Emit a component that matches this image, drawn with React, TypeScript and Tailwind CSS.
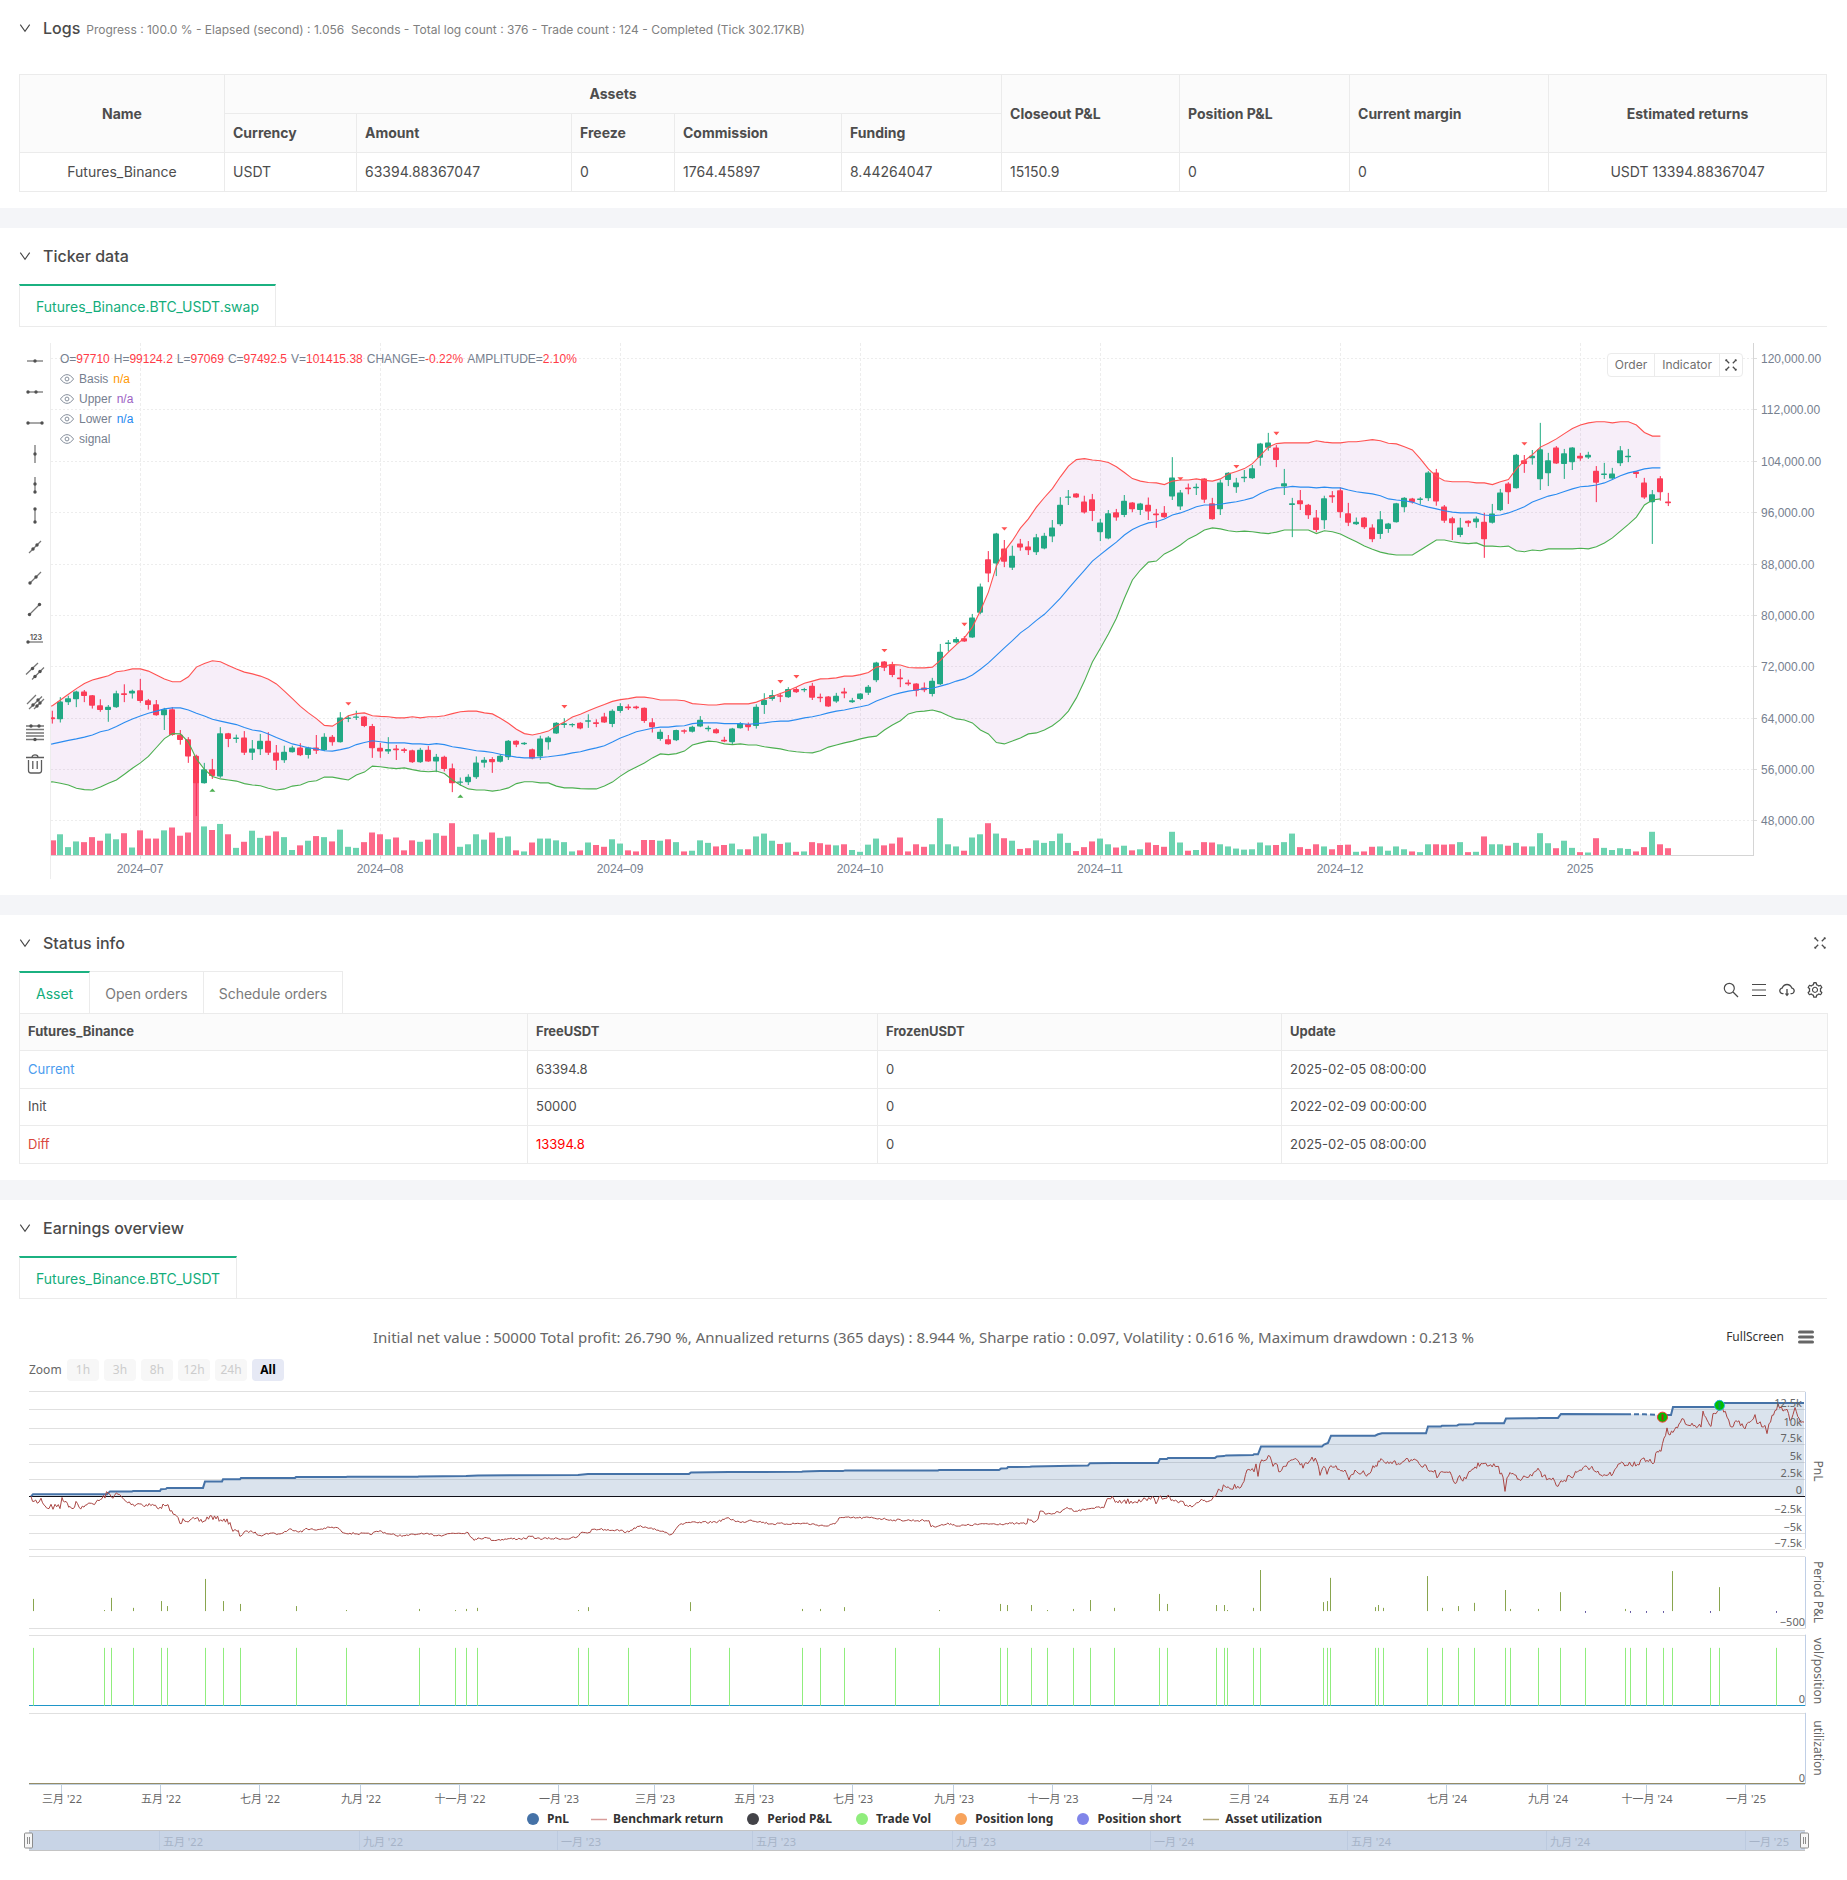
import { Fragment, type ReactNode } from 'react';
import { AiOutlineCloudDownload, AiOutlineSetting } from 'react-icons/ai';

type Point = [number, number];
type Candle = [up: 0 | 1, high: number, top: number, bottom: number, low: number, volume: number];

/* ---------- Ticker data ---------- */

const CANDLES: Candle[] = [
  [0, 1052, 1070, 1076, 1088, 1415], [1, 1014, 1026, 1076, 1085, 1398], [1, 1010, 1017, 1028, 1036, 1434],
  [1, 996, 998, 1020, 1042, 1418], [0, 994, 998, 1011, 1028, 1420], [0, 1008, 1009, 1038, 1046, 1406],
  [0, 1020, 1037, 1050, 1055, 1416], [1, 1036, 1041, 1050, 1083, 1396], [1, 996, 1003, 1042, 1044, 1412],
  [0, 978, 1003, 1008, 1028, 1395], [1, 993, 996, 1004, 1018, 1435], [0, 963, 995, 1025, 1030, 1387],
  [0, 1019, 1023, 1036, 1049, 1410], [0, 1022, 1034, 1065, 1066, 1410], [1, 1044, 1048, 1065, 1106, 1387],
  [0, 1042, 1048, 1120, 1122, 1379], [0, 1106, 1119, 1134, 1147, 1402], [0, 1126, 1132, 1180, 1198, 1393],
  [0, 1175, 1178, 1255, 1347, 1225], [1, 1198, 1216, 1255, 1256, 1376], [0, 1187, 1216, 1235, 1243, 1386],
  [1, 1098, 1115, 1236, 1240, 1369], [0, 1114, 1115, 1131, 1154, 1398], [1, 1119, 1127, 1131, 1142, 1436],
  [0, 1109, 1127, 1170, 1176, 1419], [1, 1134, 1158, 1170, 1190, 1388], [1, 1117, 1136, 1160, 1176, 1408],
  [0, 1112, 1136, 1170, 1176, 1402], [0, 1148, 1169, 1192, 1218, 1390], [1, 1150, 1167, 1191, 1198, 1406],
  [1, 1150, 1155, 1168, 1169, 1442], [0, 1143, 1155, 1177, 1179, 1429], [1, 1153, 1155, 1176, 1186, 1416],
  [0, 1120, 1155, 1164, 1173, 1403], [1, 1115, 1125, 1163, 1165, 1406], [0, 1120, 1125, 1140, 1150, 1418],
  [1, 1056, 1071, 1140, 1141, 1385], [1, 1065, 1071, 1075, 1084, 1433], [1, 1052, 1068, 1072, 1078, 1436],
  [0, 1067, 1068, 1095, 1098, 1420], [0, 1089, 1095, 1157, 1184, 1393], [0, 1142, 1156, 1166, 1184, 1398],
  [1, 1126, 1159, 1166, 1173, 1412], [0, 1148, 1158, 1163, 1190, 1407], [0, 1156, 1160, 1165, 1170, 1443],
  [0, 1161, 1163, 1196, 1198, 1415], [1, 1156, 1161, 1196, 1198, 1419], [0, 1151, 1161, 1194, 1195, 1413],
  [1, 1173, 1181, 1194, 1224, 1395], [0, 1178, 1181, 1215, 1222, 1402], [0, 1200, 1213, 1255, 1280, 1367],
  [1, 1239, 1250, 1254, 1262, 1433], [1, 1230, 1237, 1252, 1260, 1426], [1, 1180, 1197, 1238, 1243, 1398],
  [1, 1182, 1189, 1198, 1211, 1413], [0, 1182, 1187, 1196, 1226, 1393], [1, 1173, 1178, 1195, 1197, 1408],
  [1, 1134, 1136, 1182, 1190, 1404], [0, 1135, 1136, 1147, 1154, 1443], [1, 1140, 1142, 1146, 1148, 1446],
  [0, 1158, 1160, 1186, 1188, 1421], [1, 1122, 1130, 1180, 1190, 1410], [1, 1123, 1127, 1140, 1161, 1410],
  [1, 1084, 1086, 1116, 1117, 1415], [1, 1073, 1087, 1092, 1100, 1420], [1, 1087, 1089, 1092, 1098, 1446],
  [0, 1084, 1086, 1102, 1104, 1443], [1, 1062, 1079, 1083, 1100, 1421], [0, 1076, 1084, 1089, 1098, 1428],
  [0, 1058, 1068, 1085, 1086, 1433], [1, 1048, 1052, 1089, 1098, 1412], [1, 1031, 1039, 1053, 1058, 1424],
  [0, 1034, 1040, 1045, 1050, 1443], [0, 1038, 1040, 1045, 1048, 1446], [0, 1043, 1044, 1081, 1086, 1414],
  [0, 1073, 1084, 1098, 1113, 1414], [1, 1104, 1111, 1131, 1136, 1416], [0, 1120, 1132, 1146, 1147, 1412],
  [1, 1105, 1106, 1135, 1137, 1420], [0, 1104, 1107, 1111, 1116, 1446], [1, 1094, 1097, 1111, 1113, 1444],
  [1, 1067, 1077, 1096, 1098, 1415], [1, 1094, 1100, 1104, 1110, 1422], [0, 1101, 1104, 1115, 1116, 1432],
  [0, 1125, 1133, 1138, 1140, 1428], [1, 1100, 1102, 1140, 1148, 1424], [1, 1084, 1087, 1101, 1102, 1440],
  [0, 1085, 1089, 1098, 1108, 1440], [1, 1034, 1041, 1095, 1102, 1404], [1, 1003, 1021, 1036, 1061, 1396],
  [1, 994, 1008, 1019, 1024, 1416], [0, 1002, 1009, 1013, 1028, 1425], [1, 986, 991, 1014, 1016, 1421],
  [0, 986, 991, 1000, 1002, 1447], [1, 988, 991, 995, 1000, 1446], [0, 974, 982, 1016, 1022, 1420],
  [0, 1004, 1013, 1017, 1028, 1423], [0, 1011, 1012, 1040, 1041, 1427], [1, 1002, 1010, 1026, 1030, 1429],
  [0, 988, 998, 1004, 1017, 1426], [1, 1016, 1023, 1028, 1030, 1442], [1, 1003, 1004, 1019, 1022, 1447],
  [1, 980, 985, 1002, 1008, 1427], [1, 915, 917, 967, 972, 1410], [0, 913, 914, 932, 941, 1429],
  [0, 915, 922, 952, 958, 1424], [0, 935, 959, 964, 986, 1407], [0, 965, 973, 978, 982, 1446],
  [0, 975, 976, 996, 1012, 1426], [0, 973, 987, 995, 1000, 1433], [1, 960, 968, 1005, 1012, 1426],
  [1, 865, 887, 978, 980, 1353], [1, 854, 861, 865, 886, 1426], [1, 846, 851, 861, 864, 1432],
  [0, 843, 849, 858, 859, 1444], [1, 781, 791, 847, 848, 1407], [1, 696, 704, 778, 782, 1398],
  [0, 605, 628, 668, 692, 1367], [1, 554, 556, 640, 675, 1396], [0, 574, 598, 635, 650, 1409],
  [1, 590, 618, 652, 658, 1416], [0, 571, 584, 595, 604, 1439], [0, 577, 592, 603, 616, 1437],
  [1, 557, 566, 608, 616, 1415], [1, 554, 562, 598, 600, 1422], [1, 518, 539, 564, 580, 1417],
  [1, 454, 475, 530, 535, 1396], [1, 434, 452, 456, 476, 1422], [0, 443, 444, 455, 456, 1445],
  [0, 450, 466, 497, 500, 1434], [0, 445, 460, 493, 521, 1418], [1, 515, 525, 552, 577, 1410],
  [1, 490, 499, 570, 572, 1426], [0, 487, 496, 511, 520, 1435], [1, 448, 464, 504, 510, 1430],
  [0, 468, 469, 488, 496, 1443], [1, 470, 472, 490, 504, 1440], [0, 455, 475, 494, 518, 1421],
  [0, 487, 500, 505, 540, 1428], [0, 479, 498, 510, 512, 1433], [1, 342, 399, 452, 462, 1391],
  [1, 434, 441, 480, 490, 1421], [0, 416, 427, 432, 446, 1444], [1, 416, 425, 429, 448, 1442],
  [0, 401, 402, 461, 470, 1420], [0, 456, 471, 516, 517, 1421], [1, 405, 413, 488, 504, 1426],
  [1, 384, 386, 406, 423, 1432], [1, 400, 413, 426, 442, 1438], [1, 378, 397, 401, 412, 1441],
  [1, 364, 373, 401, 403, 1440], [1, 302, 304, 344, 366, 1421], [1, 274, 301, 316, 324, 1429],
  [0, 308, 315, 350, 370, 1428], [1, 375, 415, 424, 448, 1420], [1, 456, 471, 476, 566, 1396],
  [0, 434, 463, 474, 490, 1434], [0, 473, 475, 505, 515, 1439], [0, 490, 511, 546, 552, 1426],
  [1, 450, 457, 519, 543, 1432], [0, 437, 449, 454, 470, 1440], [0, 427, 435, 496, 512, 1428],
  [0, 470, 499, 526, 535, 1427], [1, 511, 523, 530, 532, 1447], [0, 510, 511, 538, 543, 1446],
  [0, 530, 539, 572, 580, 1433], [1, 493, 516, 557, 571, 1432], [1, 526, 528, 543, 554, 1444],
  [1, 470, 471, 524, 525, 1432], [1, 454, 456, 482, 496, 1440], [0, 456, 458, 468, 472, 1446],
  [1, 454, 458, 462, 475, 1448], [1, 381, 385, 457, 465, 1426], [0, 375, 385, 466, 478, 1426],
  [0, 476, 480, 520, 526, 1427], [0, 509, 513, 527, 574, 1426], [1, 512, 539, 560, 566, 1420],
  [0, 519, 520, 527, 537, 1448], [1, 508, 514, 524, 540, 1447], [0, 498, 523, 572, 624, 1404],
  [1, 473, 500, 526, 528, 1426], [1, 431, 441, 491, 493, 1426], [0, 412, 416, 440, 473, 1430],
  [1, 333, 335, 429, 430, 1422], [0, 336, 351, 361, 386, 1432], [1, 322, 338, 345, 363, 1432],
  [1, 246, 320, 404, 434, 1395], [1, 330, 351, 387, 423, 1423], [0, 311, 315, 360, 361, 1437],
  [1, 319, 331, 361, 403, 1416], [1, 314, 315, 356, 378, 1436], [0, 330, 338, 346, 352, 1448],
  [1, 327, 335, 343, 347, 1449], [0, 367, 380, 414, 468, 1409], [1, 358, 388, 392, 403, 1436],
  [1, 372, 388, 402, 405, 1442], [1, 311, 323, 359, 367, 1437], [1, 319, 338, 342, 356, 1439],
  [0, 381, 382, 389, 400, 1446], [0, 400, 413, 455, 459, 1434], [1, 434, 446, 468, 585, 1391],
  [0, 395, 401, 440, 464, 1426], [0, 442, 466, 471, 479, 1437]
];

const UPPER = [
  1038, 1022, 1006, 990, 976, 966, 960, 954, 943, 940, 935, 935, 941, 952, 963, 971, 971, 957, 930, 920, 912, 915, 925,
  935, 944, 949, 955, 964, 977, 997, 1018, 1040, 1058, 1074, 1093, 1095, 1081, 1066, 1060, 1058, 1066, 1068, 1069, 1072,
  1072, 1069, 1072, 1069, 1069, 1066, 1060, 1055, 1053, 1053, 1058, 1061, 1073, 1087, 1104, 1116, 1120, 1115, 1109,
  1095, 1084, 1070, 1062, 1052, 1043, 1035, 1026, 1021, 1018, 1014, 1014, 1017, 1022, 1022, 1022, 1024, 1032, 1034,
  1036, 1036, 1033, 1033, 1033, 1033, 1028, 1019, 1012, 1004, 995, 986, 975, 969, 963, 962, 960, 955, 955, 951, 945,
  930, 926, 923, 924, 931, 932, 932, 930, 911, 888, 867, 848, 818, 772, 720, 647, 606, 576, 541, 515, 482, 455, 430,
  397, 367, 349, 346, 350, 352, 357, 369, 385, 402, 409, 413, 414, 419, 409, 406, 406, 403, 407, 409, 403, 389, 382,
  374, 360, 337, 314, 304, 302, 302, 302, 302, 296, 300, 302, 302, 299, 299, 296, 293, 296, 303, 305, 313, 322, 347,
  375, 396, 408, 411, 411, 411, 414, 414, 419, 411, 405, 375, 352, 335, 314, 303, 291, 276, 262, 252, 246, 243, 243,
  246, 243, 243, 252, 273, 283, 283
];

const BASIS = [
  1145, 1140, 1135, 1131, 1126, 1120, 1111, 1106, 1096, 1085, 1075, 1067, 1059, 1053, 1047, 1044, 1044, 1050, 1059,
  1067, 1076, 1081, 1086, 1091, 1099, 1106, 1109, 1117, 1127, 1136, 1145, 1150, 1156, 1159, 1164, 1165, 1161, 1156,
  1147, 1141, 1136, 1139, 1142, 1142, 1142, 1145, 1145, 1147, 1144, 1147, 1153, 1156, 1160, 1164, 1166, 1169, 1174,
  1178, 1182, 1184, 1184, 1183, 1181, 1178, 1175, 1170, 1167, 1161, 1156, 1150, 1140, 1128, 1120, 1111, 1106, 1101,
  1098, 1098, 1095, 1094, 1088, 1086, 1086, 1086, 1088, 1088, 1088, 1090, 1088, 1086, 1083, 1081, 1081, 1077, 1072,
  1069, 1064, 1058, 1053, 1050, 1045, 1041, 1036, 1025, 1016, 1008, 1002, 997, 994, 990, 989, 983, 977, 969, 963, 952,
  936, 918, 897, 876, 856, 834, 818, 799, 782, 760, 737, 710, 684, 659, 633, 615, 597, 580, 560, 545, 534, 526, 523,
  515, 504, 498, 490, 481, 476, 476, 474, 470, 467, 462, 456, 444, 434, 428, 427, 424, 426, 426, 428, 426, 428, 428,
  434, 439, 442, 445, 450, 459, 462, 464, 468, 476, 482, 487, 492, 496, 498, 498, 498, 504, 506, 504, 498, 490, 481,
  468, 459, 451, 446, 438, 431, 425, 423, 420, 414, 405, 394, 386, 381, 375, 372, 372
];

const LOWER = [
  1251, 1255, 1260, 1269, 1273, 1274, 1266, 1255, 1246, 1230, 1213, 1198, 1180, 1155, 1130, 1116, 1117, 1140, 1187,
  1216, 1236, 1243, 1246, 1249, 1256, 1260, 1262, 1269, 1274, 1271, 1263, 1260, 1251, 1248, 1238, 1238, 1242, 1246,
  1232, 1224, 1207, 1209, 1212, 1214, 1212, 1217, 1221, 1223, 1221, 1228, 1246, 1260, 1271, 1274, 1274, 1277, 1274,
  1268, 1256, 1251, 1251, 1254, 1254, 1263, 1268, 1268, 1270, 1271, 1271, 1263, 1252, 1235, 1221, 1210, 1198, 1184,
  1173, 1175, 1172, 1165, 1148, 1142, 1137, 1139, 1145, 1147, 1145, 1148, 1148, 1153, 1156, 1159, 1164, 1167, 1169,
  1170, 1164, 1154, 1148, 1142, 1137, 1131, 1126, 1123, 1106, 1092, 1080, 1061, 1055, 1053, 1050, 1056, 1066, 1075,
  1078, 1086, 1106, 1117, 1141, 1145, 1137, 1128, 1117, 1114, 1106, 1094, 1077, 1053, 1016, 969, 916, 877, 837, 793,
  737, 686, 658, 636, 633, 613, 602, 588, 571, 560, 546, 540, 543, 548, 551, 549, 551, 554, 556, 552, 546, 546, 546,
  546, 556, 548, 551, 557, 568, 579, 591, 600, 608, 613, 616, 616, 616, 602, 588, 574, 574, 579, 582, 584, 582, 591,
  591, 593, 591, 604, 607, 602, 604, 599, 599, 599, 599, 597, 599, 593, 582, 568, 549, 530, 510, 476, 462, 459
];

const SELL_SIGNALS: Point[] = [
  [37, 1028], [64, 1036], [91, 966], [93, 952], [104, 879], [114, 806], [119, 538], [141, 398], [148, 364], [153, 271],
  [184, 300]
];
const BUY_SIGNALS: Point[] = [[20, 1279], [51, 1296]];

const PRICE_TICKS = [
  '120,000.00', '112,000.00', '104,000.00', '96,000.00', '88,000.00', '80,000.00', '72,000.00', '64,000.00',
  '56,000.00', '48,000.00'
];
const MONTH_TICKS: [string, number][] = [
  ['2024–07', 140], ['2024–08', 380], ['2024–09', 620], ['2024–10', 860], ['2024–11', 1100], ['2024–12', 1340],
  ['2025', 1580]
];

// chart units -> pixels
const cx = (i: number) => 52.4 + i * 8;
const cy = (v: number) => v / 2.8;

const linePath = (points: Point[]) => points.map(([x, y], i) => `${i ? 'L' : 'M'}${x.toFixed(1)} ${y.toFixed(1)}`).join('');
const bandPoints = (values: number[]): Point[] => [[50, cy(values[0] + 1)], ...values.map((v, i): Point => [cx(i), cy(v)])];

function TickerChart() {
  const upper = bandPoints(UPPER);
  const lower = bandPoints(LOWER);
  return (
    <svg viewBox="50 0 1797 544" className="block w-full" role="img" aria-label="BTC_USDT candles">
      {PRICE_TICKS.map((label, i) => {
        const y = Math.floor(23.6 + i * 51.35) + 0.5;
        return (
          <g key={label}>
            <line x1={51} x2={1753} y1={y} y2={y} stroke="#ededed" strokeDasharray="2 2" />
            <line x1={1754} x2={1757} y1={y} y2={y} stroke="#dddddd" />
            <text x={1761} y={y + 4} fontSize={12} fill="#76808f" fontFamily="'Liberation Sans', sans-serif">{label}</text>
          </g>
        );
      })}
      {MONTH_TICKS.map(([label, x]) => (
        <g key={label}>
          <line x1={x + 0.5} x2={x + 0.5} y1={8} y2={520} stroke="#ededed" strokeDasharray="3 2" />
          <line x1={x + 0.5} x2={x + 0.5} y1={521} y2={524} stroke="#dddddd" />
          <text x={x} y={538} fontSize={12} textAnchor="middle" fill="#76808f" fontFamily="'Liberation Sans', sans-serif">
            {label}
          </text>
        </g>
      ))}

      <path d={`${linePath(upper)}${linePath([...lower].reverse()).replace('M', 'L')}Z`} fill="#9c27b0" fillOpacity={0.08} />

      {CANDLES.map(([up, , , , , volume], i) => (
        <rect
          key={i}
          x={Math.max(51, Math.round(cx(i) - 3))}
          y={cy(volume)}
          width={i === 0 ? 5 : 6}
          height={cy(1457 - volume)}
          fill={up ? '#6cd3b0' : '#fd6889'}
        />
      ))}
      {CANDLES.map(([up, high, top, bottom, low], i) => (
        <g key={i} fill={up ? '#1fab80' : '#f9294f'}>
          <rect x={Math.round(cx(i)) - 0.2} y={cy(high)} width={1} height={cy(low - high)} />
          <rect
            x={Math.max(51, Math.round(cx(i) - 3))}
            y={cy(top)}
            width={i === 0 ? 4 : 6}
            height={Math.max(1.4, cy(bottom - top))}
            rx={0.8}
            fill={up ? '#22a884' : '#fb3d57'}
          />
        </g>
      ))}

      <path d={linePath(upper)} fill="none" stroke="#ff5252" strokeWidth={1.1} />
      <path d={linePath(bandPoints(BASIS))} fill="none" stroke="#2b8cf0" strokeWidth={1.1} />
      <path d={linePath(lower)} fill="none" stroke="#4caf50" strokeWidth={1.1} />

      {SELL_SIGNALS.map(([i, v]) => (
        <path key={i} d={`M${cx(i) - 3} ${cy(v)}h6l-3 3.4z`} fill="#ff5252" />
      ))}
      {BUY_SIGNALS.map(([i, v]) => (
        <path key={i} d={`M${cx(i) - 3} ${cy(v)}h6l-3 -3.4z`} fill="#4caf50" />
      ))}

      <line x1={50.5} x2={50.5} y1={8} y2={544} stroke="#ededed" />
      <line x1={51} x2={1753} y1={520.5} y2={520.5} stroke="#d5d5d5" />
      <line x1={1753.5} x2={1753.5} y1={8} y2={521} stroke="#d5d5d5" />
    </svg>
  );
}

/* ---------- Earnings data ---------- */

const PNL: Point[] = [
  [31, 494], [33, 488], [107, 488], [110, 480], [132, 480], [133, 479], [160, 479], [161, 474], [166, 473], [167, 470],
  [203, 470], [205, 452], [222, 452], [223, 446], [240, 446], [241, 442], [295, 442], [296, 440], [346, 440], [347, 439],
  [418, 439], [419, 438], [466, 437], [478, 435], [578, 434], [588, 431], [689, 431], [691, 427], [729, 426],
  [802, 425], [803, 424], [820, 423], [843, 423], [845, 421], [938, 421], [939, 420], [999, 420], [1001, 416],
  [1007, 415], [1008, 412], [1030, 411], [1032, 410], [1073, 408], [1088, 407], [1090, 401], [1113, 400], [1158, 400],
  [1160, 389], [1167, 389], [1168, 386], [1215, 386], [1217, 382], [1224, 381], [1226, 379], [1253, 378], [1254, 376],
  [1258, 376], [1261, 354], [1322, 354], [1324, 349], [1328, 344], [1331, 324], [1375, 324], [1378, 320], [1382, 317],
  [1426, 317], [1428, 298], [1441, 298], [1442, 296], [1457, 295], [1459, 293], [1473, 292], [1475, 289], [1504, 289],
  [1506, 276], [1537, 275], [1539, 274], [1558, 274], [1561, 263], [1626, 264]
];
const PNL_DASHED: Point[] = [[1626, 264], [1645, 264], [1660, 266]];
const PNL_TAIL: Point[] = [[1660, 266], [1671, 266], [1673, 244], [1717, 244], [1720, 232], [1804, 232]];

const BENCHMARK: Point[] = [
  [31, 494], [34, 508], [39, 510], [41, 499], [45, 520], [49, 528], [51, 516], [53, 530], [55, 516], [60, 528],
  [62, 497], [66, 508], [70, 522], [73, 528], [76, 508], [79, 524], [84, 524], [90, 513], [96, 510], [102, 500],
  [108, 484], [111, 494], [118, 488], [124, 503], [131, 517], [138, 514], [146, 517], [154, 519], [160, 524],
  [166, 520], [168, 517], [170, 535], [175, 545], [178, 553], [180, 570], [183, 556], [190, 560], [204, 563],
  [210, 548], [216, 557], [224, 557], [230, 567], [233, 592], [237, 592], [241, 605], [244, 594], [252, 592],
  [260, 603], [270, 597], [280, 599], [291, 585], [302, 594], [306, 583], [315, 588], [332, 580], [339, 584],
  [342, 594], [350, 597], [370, 600], [380, 590], [388, 599], [395, 602], [405, 604], [420, 599], [440, 603],
  [452, 597], [468, 595], [474, 617], [478, 610], [488, 611], [493, 617], [505, 613], [525, 612], [531, 606],
  [536, 612], [570, 612], [577, 608], [582, 594], [589, 595], [593, 586], [600, 586], [616, 588], [629, 594],
  [634, 582], [639, 578], [653, 586], [663, 591], [671, 601], [678, 577], [686, 567], [698, 568], [718, 565],
  [727, 554], [741, 567], [751, 560], [771, 571], [796, 570], [804, 569], [827, 577], [835, 571], [839, 554],
  [873, 554], [894, 560], [929, 562], [931, 579], [951, 570], [957, 577], [984, 571], [1027, 570], [1028, 556],
  [1033, 566], [1038, 558], [1040, 535], [1047, 543], [1061, 538], [1067, 525], [1076, 535], [1090, 528],
  [1102, 524], [1109, 500], [1114, 502], [1118, 512], [1131, 507], [1147, 506], [1154, 498], [1156, 515],
  [1159, 495], [1164, 500], [1168, 490], [1171, 505], [1180, 507], [1190, 518], [1200, 507], [1212, 503],
  [1217, 484], [1225, 466], [1241, 468], [1244, 452], [1247, 420], [1254, 425], [1256, 403], [1258, 438],
  [1260, 402], [1270, 382], [1273, 410], [1276, 402], [1280, 425], [1291, 392], [1299, 398], [1303, 415],
  [1312, 384], [1317, 398], [1320, 435], [1324, 410], [1327, 432], [1329, 415], [1336, 408], [1342, 422],
  [1345, 420], [1349, 448], [1355, 420], [1365, 432], [1371, 425], [1373, 408], [1377, 410], [1381, 388],
  [1386, 402], [1398, 402], [1406, 388], [1419, 402], [1423, 412], [1435, 420], [1437, 442], [1440, 427],
  [1450, 425], [1455, 458], [1458, 442], [1466, 445], [1472, 418], [1481, 402], [1489, 408], [1497, 410],
  [1503, 440], [1505, 480], [1507, 442], [1510, 427], [1522, 445], [1532, 437], [1538, 415], [1542, 440],
  [1553, 442], [1558, 466], [1561, 450], [1571, 440], [1580, 420], [1592, 410], [1601, 434], [1613, 430],
  [1620, 402], [1639, 406], [1644, 386], [1653, 403], [1657, 368], [1661, 368], [1667, 302], [1670, 322],
  [1673, 315], [1682, 276], [1689, 295], [1701, 300], [1703, 255], [1707, 280], [1711, 298], [1713, 262],
  [1722, 242], [1727, 272], [1732, 300], [1736, 282], [1745, 305], [1755, 265], [1757, 290], [1765, 295],
  [1767, 318], [1769, 290], [1778, 235], [1783, 255], [1787, 250], [1790, 282], [1793, 265], [1795, 245],
  [1799, 275], [1804, 286]
];

// [x, value top, or 820 for a small loss, or 0 when nothing was realised]
const TRADES: Point[] = [
  [33, 781], [104, 812], [111, 778], [133, 806], [161, 787], [167, 801], [205, 725], [223, 787], [240, 795], [296, 801],
  [346, 812], [419, 809], [455, 812], [466, 809], [477, 806], [578, 812], [588, 804], [628, 0], [690, 790], [729, 0],
  [802, 809], [820, 809], [844, 804], [895, 0], [939, 812], [1000, 795], [1007, 798], [1031, 798], [1047, 812],
  [1073, 809], [1090, 784], [1114, 806], [1159, 767], [1167, 795], [1216, 798], [1224, 798], [1227, 812], [1253, 806],
  [1260, 700], [1323, 790], [1327, 787], [1330, 722], [1375, 804], [1378, 798], [1383, 806], [1427, 717], [1442, 806],
  [1458, 801], [1474, 792], [1505, 756], [1510, 809], [1538, 809], [1560, 762], [1585, 820], [1625, 809], [1630, 820],
  [1646, 820], [1663, 820], [1672, 703], [1710, 820], [1719, 748], [1776, 820]
];

const PNL_TICKS: [string, number][] = [
  ['', 200], ['12.5k', 250], ['10k', 301], ['7.5k', 348], ['5k', 398], ['2.5k', 446], ['0', 494], ['−2.5k', 545],
  ['−5k', 595], ['−7.5k', 642]
];
const TIME_TICKS: [string, number][] = [
  ["三月 '22", 61], ["五月 '22", 160], ["七月 '22", 259], ["九月 '22", 360], ["十一月 '22", 459], ["一月 '23", 558],
  ["三月 '23", 654], ["五月 '23", 753], ["七月 '23", 852], ["九月 '23", 953], ["十一月 '23", 1052], ["一月 '24", 1151],
  ["三月 '24", 1248], ["五月 '24", 1347], ["七月 '24", 1446], ["九月 '24", 1547], ["十一月 '24", 1646], ["一月 '25", 1745]
];
const NAV_TICKS: [string, number][] = [
  ["五月 '22", 159], ["九月 '22", 359], ["一月 '23", 557], ["五月 '23", 752], ["九月 '23", 952], ["一月 '24", 1150],
  ["五月 '24", 1347], ["九月 '24", 1546], ["一月 '25", 1745]
];
const AXIS_TITLES: [string, number][] = [['PnL', 86], ['Period P&L', 207], ['vol/position', 286], ['utilization', 363]];

const CHART_FONT = "'Noto Sans', 'Noto Sans CJK SC', sans-serif";

const ey = (v: number) => v / 2.8 - 65;
const scaled = (points: Point[]) => points.map(([x, y]): Point => [x, ey(y)]);
const crisp = (v: number) => Math.round(ey(v)) + 0.5;

// daily closes between the key points, with a small repeatable wobble
function dailySeries(keys: Point[]): Point[] {
  const out: Point[] = [];
  let seed = 7;
  for (let i = 1; i < keys.length; i++) {
    const [x0, y0] = keys[i - 1];
    const [x1, y1] = keys[i];
    const steps = Math.max(1, Math.round((x1 - x0) / 1.6));
    const amp = x0 > 240 && x0 < 1100 ? 3 : 8;
    for (let s = 0; s < steps; s++) {
      seed = (seed * 16807) % 2147483647;
      const wobble = s === 0 ? 0 : (seed / 2147483647 - 0.5) * 2 * amp;
      out.push([x0 + ((x1 - x0) * s) / steps, ey(y0 + ((y1 - y0) * s) / steps + wobble)]);
    }
  }
  out.push([keys[keys.length - 1][0], ey(keys[keys.length - 1][1])]);
  return out;
}

function EarningsChart() {
  const area = scaled([...PNL, ...PNL_DASHED, ...PNL_TAIL]);
  const blueLine = { fill: 'none', stroke: '#4572a7', strokeWidth: 2 };
  return (
    <svg viewBox="0 0 1847 423" className="block w-full" role="img" aria-label="Earnings" fontFamily={CHART_FONT} fontSize={11}>
      {PNL_TICKS.map(([label, v]) => (
        <line key={label} x1={29} x2={1805} y1={crisp(v)} y2={crisp(v)} stroke="#e0e0e0" />
      ))}
      {[662, 863, 881, 1100].map((v) => (
        <line key={v} x1={29} x2={1805} y1={crisp(v)} y2={crisp(v)} stroke="#e0e0e0" />
      ))}

      <path d={`${linePath(area)}V${ey(494)}H31Z`} fill="#4572a7" fillOpacity={0.2} />
      <line x1={29} x2={1805} y1={crisp(493)} y2={crisp(493)} stroke="#101018" />
      <path d={linePath(scaled(PNL))} {...blueLine} />
      <path d={linePath(scaled(PNL_DASHED))} {...blueLine} strokeDasharray="5 3" />
      <path d={linePath(scaled(PNL_TAIL))} {...blueLine} />
      <path d={linePath(dailySeries(BENCHMARK))} fill="none" stroke="#aa4643" strokeWidth={1} strokeLinejoin="round" />

      <g strokeWidth={1} fill="#00c000">
        <circle cx={1662.5} cy={ey(272)} r={5} stroke="#ff3030" />
        <path d={`M1662.5 ${ey(264)}v6`} stroke="#b03010" strokeWidth={2} />
        <circle cx={1719.5} cy={ey(239)} r={5} stroke="#2bb5e8" />
        <path d={`M1719.5 ${ey(231)}v6`} stroke="#0a8f70" strokeWidth={2} />
      </g>

      {TRADES.map(([x, v]) => (
        <Fragment key={x}>
          {v > 0 && (
            <rect
              x={x}
              y={ey(Math.min(v, 815))}
              width={1}
              height={Math.abs(815 - v) / 2.8}
              fill={v > 815 ? '#5a4e9c' : '#89a54e'}
            />
          )}
        </Fragment>
      ))}
      <line x1={29} x2={1805} y1={crisp(1079)} y2={crisp(1079)} stroke="#1f96c8" />
      {TRADES.map(([x]) => (
        <rect key={x} x={x} y={ey(918)} width={1} height={162 / 2.8} fill="#90ed7d" />
      ))}
      <line x1={29} x2={1805} y1={crisp(1300)} y2={crisp(1300)} stroke="#c0d0e0" />
      <line x1={29} x2={1805} y1={crisp(1297)} y2={crisp(1297)} stroke="#968c66" />

      {[[201, 640], [663, 864], [881, 1081], [1100, 1299]].map(([a, b]) => (
        <line key={a} x1={1805.5} x2={1805.5} y1={ey(a)} y2={ey(b)} stroke="#c0cfe6" strokeWidth={1} />
      ))}

      <g fill="#666666">
        {PNL_TICKS.map(([label, v]) => (
          <text key={label} x={1802} y={crisp(v) - 3} textAnchor="end">{label}</text>
        ))}
        <text x={1805} y={crisp(863) - 3} textAnchor="end">−500</text>
        <text x={1805} y={crisp(1079) - 3} textAnchor="end">0</text>
        <text x={1805} y={crisp(1298) - 3} textAnchor="end">0</text>
        {AXIS_TITLES.map(([label, y]) => (
          <text key={label} transform={`translate(1814 ${y}) rotate(90)`} textAnchor="middle" fontSize={12}>{label}</text>
        ))}
        {TIME_TICKS.map(([label, x]) => (
          <g key={label}>
            <line x1={x + 0.5} x2={x + 0.5} y1={400} y2={409} stroke="#c0d0e0" />
            <text x={x + 1} y={418} textAnchor="middle">{label}</text>
          </g>
        ))}
      </g>
    </svg>
  );
}

function Navigator() {
  return (
    <svg viewBox="0 0 1847 24" className="block w-full" role="img" aria-label="Range navigator" fontFamily={CHART_FONT} fontSize={11}>
      <rect x={29} y={1.5} width={1776} height={20} fill="#c8d4e6" />
      <path d="M29 1.5H1805M29 21.5H1805" stroke="#c4c4c4" />
      {NAV_TICKS.map(([label, x]) => (
        <g key={label}>
          <line x1={x + 0.5} x2={x + 0.5} y1={2} y2={21} stroke="#bccadf" />
          <text x={x + 4} y={17} fill="#a6b3c7">{label}</text>
        </g>
      ))}
      {[28.5, 1804.5].map((x) => (
        <g key={x} stroke="#8c8c8c">
          <rect x={x - 4} y={4} width={8} height={15} fill="#f6f6f6" rx={1} />
          <path d={`M${x - 1} 8v7M${x + 1} 8v7`} />
        </g>
      ))}
    </svg>
  );
}

/* ---------- Icons ---------- */

function Chevron() {
  return (
    <svg viewBox="0 0 12 12" className="h-3 w-3" fill="none" stroke="#444" strokeWidth={1.1}>
      <path d="M1.3 2.6L6 9.2L10.7 2.6" />
    </svg>
  );
}

function ExpandIcon() {
  return (
    <svg viewBox="0 0 14 14" className="h-3.5 w-3.5" fill="none" stroke="#4a4a4a" strokeWidth={1.3}>
      <path d="M5.2 5.2L2 2M8.8 5.2L12 2M5.2 8.8L2 12M8.8 8.8L12 12" />
      <path d="M1.7 3.2V1.7H3.2M10.8 1.7h1.5V3.200M1.7 10.8v1.5H3.2M10.8 12.3h1.5V10.8" strokeWidth={0.8} />
    </svg>
  );
}

function EyeIcon() {
  return (
    <svg viewBox="0 0 16 12" className="h-3 w-3.5" fill="none" stroke="#76808f" strokeWidth={1}>
      <path d="M0.5 6C3 2.6 5.4 1 8 1S13 2.6 15.5 6C13 9.4 10.6 11 8 11S3 9.4 0.5 6Z" />
      <circle cx={8} cy={6} r={2.2} />
    </svg>
  );
}

type Tool = { name: string; lines: string; dots: Point[]; extra?: ReactNode };

const TOOLS: Tool[] = [
  { name: 'Horizontal line', lines: 'M4 12H20', dots: [[12, 12]] },
  { name: 'Horizontal ray', lines: 'M5 12H20', dots: [[5, 12], [13, 12]] },
  { name: 'Horizontal segment', lines: 'M5 12H19', dots: [[5, 12], [19, 12]] },
  { name: 'Vertical line', lines: 'M12 3V21', dots: [[12, 12]] },
  { name: 'Vertical ray', lines: 'M12 4V19', dots: [[12, 11], [12, 19]] },
  { name: 'Vertical segment', lines: 'M12 5V19', dots: [[12, 5], [12, 18]] },
  { name: 'Straight line', lines: 'M6 18L18 6', dots: [[10, 14], [14, 10]] },
  { name: 'Ray', lines: 'M7 17L18 6', dots: [[7, 17], [13, 11]] },
  { name: 'Segment', lines: 'M7 17L17 7', dots: [[6.5, 17.5], [16.5, 7.5]] },
  {
    name: 'Price line',
    lines: 'M5 14H20',
    dots: [[5, 14]],
    extra: <text x={7} y={12} fontSize={7} fontWeight={700} stroke="none" fill="#5c5c5c">123</text>
  },
  { name: 'Price channel', lines: 'M3 15.5L15 4M9 20.5L21 8.5', dots: [[9.5, 9.5], [12, 17.5], [17, 12.5]] },
  { name: 'Parallel lines', lines: 'M4 14L13 5M6 19L19 6.5M11 19L21 9', dots: [[10, 15], [15, 10], [14, 16], [17, 13]] },
  { name: 'Fibonacci', lines: 'M3 5H21M3 8.5H21M3 12H21M3 15H21M3 18.5H21', dots: [[8, 5], [16, 5], [12, 18.5]] }
];

function ToolButton({ tool }: { tool: Tool }) {
  return (
    <button type="button" aria-label={tool.name} className="flex h-[31px] items-center justify-center">
      <svg viewBox="0 0 24 24" className="h-6 w-6" stroke="#777" strokeWidth={1.3} fill="none">
        <path d={tool.lines} />
        {tool.dots.map(([x, y]) => (
          <circle key={`${x}-${y}`} cx={x} cy={y} r={1.7} fill="#505050" stroke="none" />
        ))}
        {tool.extra}
      </svg>
    </button>
  );
}

/* ---------- Page pieces ---------- */

function SectionHeader({ title, note, children }: { title: string; note?: string; children?: ReactNode }) {
  return (
    <div className="flex h-14 items-center">
      <button type="button" className="flex items-center gap-3 text-base font-medium text-[#4a4a4a]">
        <Chevron />
        {title}
      </button>
      {note && <span className="ml-1.5 pt-1 text-xs whitespace-pre text-[#808080]">{note}</span>}
      {children}
    </div>
  );
}

function TabBar({ tabs, underline = true }: { tabs: string[]; underline?: boolean }) {
  return (
    <div role="tablist" className={`flex ${underline ? 'border-b border-[#ebebeb]' : ''}`}>
      {tabs.map((tab, i) => (
        <button
          key={tab}
          type="button"
          role="tab"
          aria-selected={i === 0}
          className={
            i === 0
              ? 'h-[42px] border-x border-t-2 border-x-[#ebebeb] border-t-[#1bb181] px-4 pt-0.5 text-sm text-[#12ad7b]'
              : 'h-[42px] border-t border-r border-[#ebebeb] px-[15px] pt-0.5 text-sm text-[#7a7a7a]'
          }
        >
          {tab}
        </button>
      ))}
    </div>
  );
}

const TH = 'border border-[#ebebeb] bg-[#fbfbfb] px-2 font-bold';
const TD = 'border border-[#ebebeb] px-2';

function LogsTable() {
  return (
    <table className="mt-[18px] w-full table-fixed border-collapse text-left text-sm text-[#4d4d4d]">
      <colgroup>
        <col className="w-[205px]" />
        <col className="w-[132px]" />
        <col className="w-[215px]" />
        <col className="w-[103px]" />
        <col className="w-[167px]" />
        <col className="w-[160px]" />
        <col className="w-[178px]" />
        <col className="w-[170px]" />
        <col className="w-[199px]" />
        <col className="w-[278px]" />
      </colgroup>
      <thead>
        <tr className="h-[39px]">
          <th rowSpan={2} className={`${TH} text-center`}>Name</th>
          <th colSpan={5} className={`${TH} text-center`}>Assets</th>
          <th rowSpan={2} className={TH}>Closeout P&amp;L</th>
          <th rowSpan={2} className={TH}>Position P&amp;L</th>
          <th rowSpan={2} className={TH}>Current margin</th>
          <th rowSpan={2} className={`${TH} text-center`}>Estimated returns</th>
        </tr>
        <tr className="h-[39px]">
          {['Currency', 'Amount', 'Freeze', 'Commission', 'Funding'].map((name) => (
            <th key={name} className={TH}>{name}</th>
          ))}
        </tr>
      </thead>
      <tbody>
        <tr className="h-[39px]">
          <td className={`${TD} text-center`}>Futures_Binance</td>
          <td className={TD}>USDT</td>
          <td className={TD}>63394.88367047</td>
          <td className={TD}>0</td>
          <td className={TD}>1764.45897</td>
          <td className={TD}>8.44264047</td>
          <td className={TD}>15150.9</td>
          <td className={TD}>0</td>
          <td className={TD}>0</td>
          <td className={`${TD} text-center`}>USDT 13394.88367047</td>
        </tr>
      </tbody>
    </table>
  );
}

const STATUS_ROWS = [
  { name: 'Current', nameClass: 'text-[#4a9bee]', free: '63394.8', freeClass: '', update: '2025-02-05 08:00:00' },
  { name: 'Init', nameClass: '', free: '50000', freeClass: '', update: '2022-02-09 00:00:00' },
  { name: 'Diff', nameClass: 'text-[#d9473d]', free: '13394.8', freeClass: 'text-[#ff0000]', update: '2025-02-05 08:00:00' }
];

function StatusTable() {
  return (
    <table className="w-full table-fixed border-collapse text-left text-[13px] text-[#4d4d4d]">
      <colgroup>
        <col className="w-[508px]" />
        <col className="w-[350px]" />
        <col className="w-[404px]" />
        <col className="w-[546px]" />
      </colgroup>
      <thead>
        <tr className="h-[37px]">
          {['Futures_Binance', 'FreeUSDT', 'FrozenUSDT', 'Update'].map((name) => (
            <th key={name} className={TH}>{name}</th>
          ))}
        </tr>
      </thead>
      <tbody>
        {STATUS_ROWS.map((row) => (
          <tr key={row.name} className="h-[38px] even:h-[37px]">
            <td className={`${TD} ${row.nameClass}`}>{row.name}</td>
            <td className={`${TD} ${row.freeClass}`}>{row.free}</td>
            <td className={TD}>0</td>
            <td className={TD}>{row.update}</td>
          </tr>
        ))}
      </tbody>
    </table>
  );
}

const QUOTE: [string, string][] = [
  ['O', '97710'], ['H', '99124.2'], ['L', '97069'], ['C', '97492.5'], ['V', '101415.38'], ['CHANGE', '-0.22%'],
  ['AMPLITUDE', '2.10%']
];
const INDICATORS: [string, string, string][] = [
  ['Basis', 'n/a', 'text-[#ff9800]'], ['Upper', 'n/a', 'text-[#9c5fc4]'], ['Lower', 'n/a', 'text-[#1e88f0]'],
  ['signal', '', '']
];

const LEGEND = [
  { name: 'PnL', color: '#4572a7', dot: true },
  { name: 'Benchmark return', color: '#d89c9a', dot: false },
  { name: 'Period P&L', color: '#434348', dot: true },
  { name: 'Trade Vol', color: '#90ed7d', dot: true },
  { name: 'Position long', color: '#f7a35c', dot: true },
  { name: 'Position short', color: '#8085e9', dot: true },
  { name: 'Asset utilization', color: '#b0a678', dot: false }
];

export default function App() {
  return (
    <main className="flex flex-col gap-5 bg-[#f4f5f8] font-['Inter',sans-serif]">
      <section className="bg-white pr-5 pb-4 pl-[19px]">
        <SectionHeader
          title="Logs"
          note="Progress : 100.0 % - Elapsed (second) : 1.056  Seconds - Total log count : 376 - Trade count : 124 - Completed (Tick 302.17KB)"
        />
        <LogsTable />
      </section>

      <section className="bg-white pb-4">
        <div className="pr-5 pl-[19px]">
          <SectionHeader title="Ticker data" />
          <TabBar tabs={['Futures_Binance.BTC_USDT.swap']} />
        </div>
        <div className="flex pt-2">
          <div className="flex w-[50px] shrink-0 flex-col pt-[10px] pl-5">
            {TOOLS.map((tool) => (
              <ToolButton key={tool.name} tool={tool} />
            ))}
            <button type="button" aria-label="Delete drawings" className="flex h-[31px] items-center justify-center">
              <svg viewBox="0 0 24 24" className="h-6 w-6" fill="none" stroke="#5c5c5c" strokeWidth={1.3}>
                <path d="M3 5.5H21M9 5.5C9 2 15 2 15 5.5M5.5 8V18.5Q5.5 21 8 21H16Q18.5 21 18.5 18.5V8M9.8 9V17M14.2 9V17" />
              </svg>
            </button>
          </div>
          <div className="relative grow">
            <TickerChart />
            <div className="absolute top-[14px] left-[10px] font-['Liberation_Sans',sans-serif] text-xs leading-5 text-[#76808f]">
              <div className="flex gap-1">
                {QUOTE.map(([key, value]) => (
                  <span key={key}>
                    {key}=<span className="text-[#ff3b47]">{value}</span>
                  </span>
                ))}
              </div>
              {INDICATORS.map(([name, value, color]) => (
                <div key={name} className="flex items-center gap-[5px]">
                  <EyeIcon />
                  <span>{name}</span>
                  <span className={color}>{value}</span>
                </div>
              ))}
            </div>
            <div className="absolute top-[18px] right-[104px] flex h-6 divide-x divide-[#ebebeb] rounded border border-[#ebebeb] bg-white text-xs text-[#707070]">
              <button type="button" className="px-[7px]">Order</button>
              <button type="button" className="px-[7px]">Indicator</button>
              <button type="button" aria-label="Expand chart" className="px-1"><ExpandIcon /></button>
            </div>
          </div>
        </div>
      </section>

      <section className="bg-white pr-5 pb-4 pl-[19px]">
        <SectionHeader title="Status info">
          <button type="button" aria-label="Expand status" className="ml-auto"><ExpandIcon /></button>
        </SectionHeader>
        <div className="flex justify-between">
          <TabBar tabs={['Asset', 'Open orders', 'Schedule orders']} underline={false} />
          <div className="flex items-center gap-2.5 pr-[3px] pb-1 text-lg text-[#4a4a4a]">
            <button type="button" aria-label="Search">
              <svg viewBox="0 0 18 18" className="h-[18px] w-[18px]" fill="none" stroke="currentColor" strokeWidth={1.2}>
                <circle cx={7.3} cy={7.3} r={5} />
                <path d="M11 11L16 16" />
              </svg>
            </button>
            <button type="button" aria-label="Columns">
              <svg viewBox="0 0 18 18" className="h-[18px] w-[18px]" stroke="currentColor" strokeWidth={1.2}>
                <path d="M2 3.5H16M2 9H16M2 14.5H16" />
              </svg>
            </button>
            <button type="button" aria-label="Download"><AiOutlineCloudDownload /></button>
            <button type="button" aria-label="Settings"><AiOutlineSetting /></button>
          </div>
        </div>
        <StatusTable />
      </section>

      <section className="bg-white pb-8">
        <div className="pr-5 pl-[19px]">
          <SectionHeader title="Earnings overview" />
          <TabBar tabs={['Futures_Binance.BTC_USDT']} />
        </div>
        <div className="pt-[26px] font-['Noto_Sans','Noto_Sans_CJK_SC',sans-serif]">
          <div className="relative flex h-6 items-center justify-center">
            <h3 className="text-[15px] text-[#666666]">
              Initial net value : 50000 Total profit: 26.790 %, Annualized returns (365 days) : 8.944 %, Sharpe ratio : 0.097,
              Volatility : 0.616 %, Maximum drawdown : 0.213 %
            </h3>
            <div className="absolute right-[33px] flex items-center gap-[14px] text-xs text-[#333333]">
              <button type="button">FullScreen</button>
              <button type="button" aria-label="Chart menu">
                <svg viewBox="0 0 16 14" className="h-3.5 w-4" stroke="#666" strokeWidth={3} strokeLinecap="round">
                  <path d="M1.5 2H14.5M1.5 7H14.5M1.5 12H14.5" />
                </svg>
              </button>
            </div>
          </div>
          <div className="mt-[10px] flex h-[22px] items-center gap-[5px] pl-[29px] text-xs text-[#666666]">
            <span className="w-[33px]">Zoom</span>
            {['1h', '3h', '8h', '12h', '24h'].map((range) => (
              <button key={range} type="button" disabled className="h-[22px] w-8 rounded-sm bg-[#f7f7f7] text-[#cccccc]">
                {range}
              </button>
            ))}
            <button type="button" className="h-[22px] w-8 rounded-sm bg-[#e6e9f5] font-bold text-black">All</button>
          </div>
          <div className="pt-1">
            <EarningsChart />
            <div className="flex h-[21px] items-center justify-center gap-[22px] text-xs font-bold text-[#333333]">
              {LEGEND.map((item) => (
                <button key={item.name} type="button" className="flex items-center gap-[6px]">
                  <svg viewBox="0 0 16 12" className="h-3 w-4">
                    {item.dot ? (
                      <circle cx={8} cy={6} r={6} fill={item.color} />
                    ) : (
                      <path d="M0 6.5H16" stroke={item.color} strokeWidth={1.5} />
                    )}
                  </svg>
                  {item.name}
                </button>
              ))}
            </div>
            <Navigator />
          </div>
        </div>
      </section>
    </main>
  );
}
